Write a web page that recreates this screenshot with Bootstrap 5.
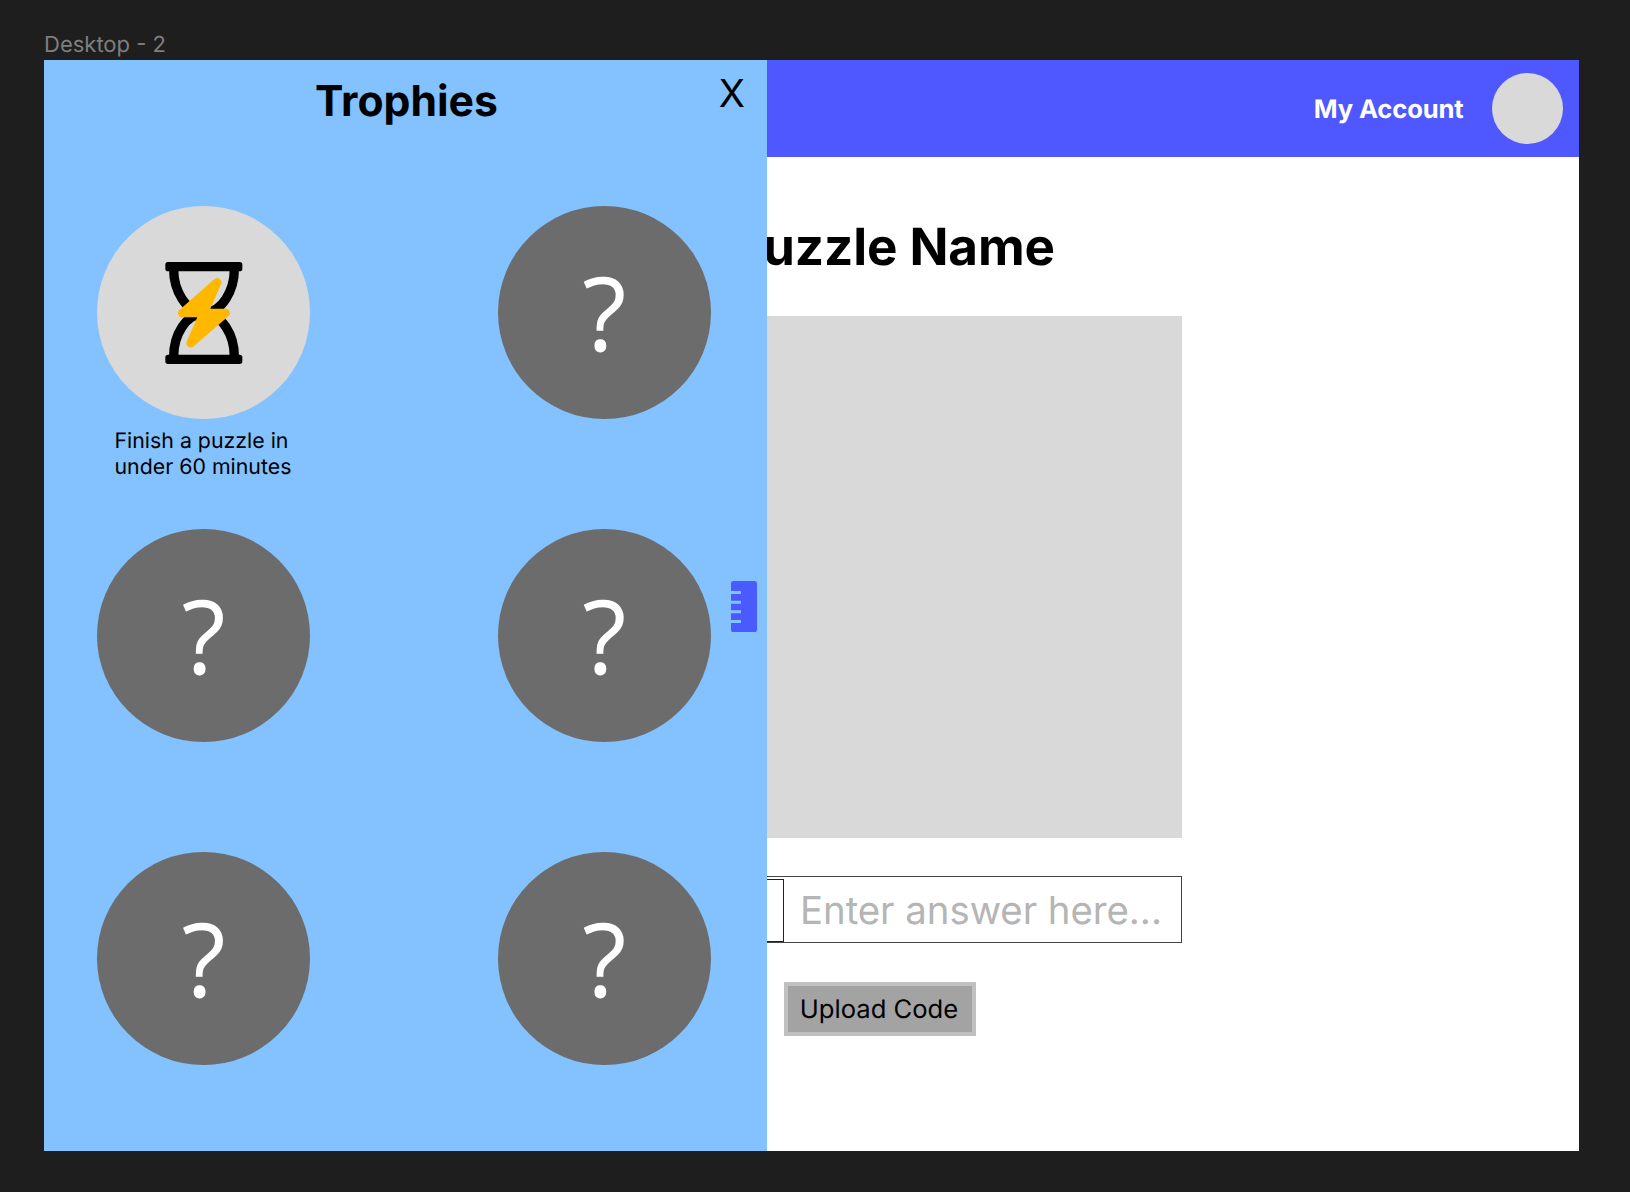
<!DOCTYPE html>
<html lang="en">
<head>
<meta charset="utf-8">
<meta name="viewport" content="width=device-width, initial-scale=1">
<title>Desktop - 2</title>
<link href="https://cdn.jsdelivr.net/npm/bootstrap@5.3.0/dist/css/bootstrap.min.css" rel="stylesheet">
<style>
  body { background: #1e1e1e; font-family: Inter, "Liberation Sans", sans-serif; text-rendering: geometricPrecision; color: #000; height: 1192px; overflow: hidden; padding: 32px 51px 0 44px; }
  .frame-label { color: #7f7f7f; font-size: 22px; line-height: 26px; height: 28px; }
  .artboard { width: 1535px; height: 1091px; background: #fff; }
  .topbar { height: 97px; background: #4f58ff; padding: 0 16px 0 0; gap: 28px; }
  .account { font-size: 25.6px; letter-spacing: -.15px; padding-top: 3px; color: #fff; }
  .avatar { width: 71.5px; height: 71.5px; background: #d9d9d9; }
  .puzzle { width: 740px; margin-left: 398px; }
  .puzzle-title { font-size: 51.2px; line-height: 62px; margin: 59px 127px 38px 0; letter-spacing: -.1px; }
  .puzzle-image { height: 522px; background: #d9d9d9; }
  .answer { height: 67px; margin-top: 38px; border: 1px solid #444; padding: 2px 0 0; }
  .answer-lead { width: 341px; border: 1px solid #222; border-left: 0; }
  .answer-text { font-size: 38.4px; letter-spacing: -.05px; line-height: 65px; color: #b5b5b5; padding-left: 16px; }
  .upload { width: 192px; height: 54px; margin: 39px 0 0 342px; border: 4px solid #c0c0c0; background: #a3a3a3; font-size: 25.6px; line-height: 48px; }
  .upload span { margin-right: 2px; }
  .drawer { width: 723px; background: #83c2ff; }
  .drawer-head { height: 146px; padding: 16px 0 0 2px; }
  .drawer-title { font-size: 42.66px; line-height: 52px; }
  .drawer-close { font-size: 38.4px; font-weight: 370; line-height: 46px; top: 11px; right: 22px; }
  .trophies { padding: 0 56px 0 53px; }
  .trophy-row { height: 323px; }
  .disc { width: 213.3px; height: 213.3px; background: #d9d9d9; }
  .disc-locked { background: #6c6c6c; color: #fff; font-family: "Open Sans", "Noto Sans", sans-serif; font-size: 102.4px; line-height: 140px; padding-bottom: 1px; }
  .trophy-note { font-size: 21.33px; line-height: 25.8px; margin: 10px 0 0 17.5px; }
  .ruler { top: 521px; right: 10px; }
</style>
</head>
<body>
<div class="frame-label">Desktop - 2</div>
<div class="artboard position-relative overflow-hidden">
  <header class="topbar d-flex align-items-center justify-content-end">
    <span class="account fw-bold">My Account</span>
    <span class="avatar rounded-circle"></span>
  </header>
  <main class="puzzle">
    <h1 class="puzzle-title fw-bold text-end text-nowrap">Puzzle Name</h1>
    <div class="puzzle-image"></div>
    <div class="answer d-flex">
      <div class="answer-lead"></div>
      <div class="answer-text text-nowrap">Enter answer here...</div>
    </div>
    <div class="upload text-center text-nowrap"><span>Upload Code</span></div>
  </main>

  <aside class="drawer position-absolute top-0 start-0 h-100">
    <div class="drawer-head text-center">
      <h2 class="drawer-title fw-bold m-0">Trophies</h2>
      <span class="drawer-close position-absolute">X</span>
    </div>
    <div class="trophies">
      <div class="trophy-row d-flex justify-content-between">
        <div>
          <div class="disc rounded-circle d-flex align-items-center justify-content-center">
            <svg width="80" height="104" viewBox="27 33 240 312">
              <g fill="none" stroke="#000" stroke-width="28">
                <path d="M56 58C56 120 92 188 147 188C202 188 238 120 238 58"/>
                <path d="M56 320C56 256 92 191 147 191C202 191 238 256 238 320"/>
              </g>
              <rect x="31" y="36" width="231" height="28" rx="8"/>
              <rect x="31" y="314" width="231" height="28" rx="8"/>
              <path fill="#ffb800" d="M175 90A13 13 0 0 1 197 105L166 176H211A13 13 0 0 1 220 199L117 288A13 13 0 0 1 96 273L127 202H84A13 13 0 0 1 74 179Z"/>
            </svg>
          </div>
          <div class="trophy-note">Finish a puzzle in<br>under 60 minutes</div>
        </div>
        <div class="disc disc-locked rounded-circle d-flex align-items-center justify-content-center">?</div>
      </div>
      <div class="trophy-row d-flex justify-content-between">
        <div class="disc disc-locked rounded-circle d-flex align-items-center justify-content-center">?</div>
        <div class="disc disc-locked rounded-circle d-flex align-items-center justify-content-center">?</div>
      </div>
      <div class="trophy-row d-flex justify-content-between">
        <div class="disc disc-locked rounded-circle d-flex align-items-center justify-content-center">?</div>
        <div class="disc disc-locked rounded-circle d-flex align-items-center justify-content-center">?</div>
      </div>
    </div>
    <svg class="ruler position-absolute" width="26" height="51.3" viewBox="0 0 78 154">
      <path fill="#4a5aff" d="M8 0H70Q78 0 78 8V146Q78 154 70 154H8Q0 154 0 146V126H30V117H0V97H30V88H0V68H30V59H0V39H30V30H0V8Q0 0 8 0Z"/>
    </svg>
  </aside>
</div>
<script src="https://cdn.jsdelivr.net/npm/bootstrap@5.3.0/dist/js/bootstrap.bundle.min.js"></script>
</body>
</html>
